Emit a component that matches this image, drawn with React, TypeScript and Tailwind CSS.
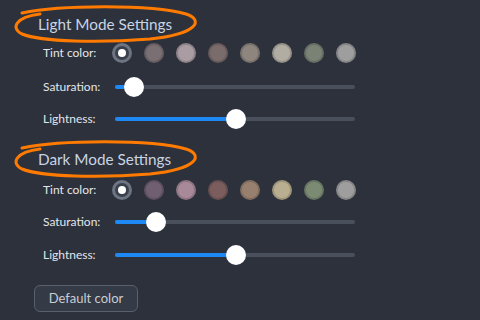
const lightSwatches = ['#7a6f73', '#a99ca2', '#7a6c6b', '#8e857e', '#b2ada3', '#7a8275', '#9e9e9e'];
const darkSwatches = ['#6f5f70', '#a78999', '#7b5d5e', '#98806f', '#b9ae8f', '#7b8b73', '#9e9e9e'];

function Scribble({ top }: { top: number }) {
  return (
    <svg
      className="absolute left-0 pointer-events-none"
      style={{ top }}
      width="210"
      height="48"
      viewBox="0 0 210 48"
      fill="none"
    >
      <path
        d="M22 13 C60 5, 150 4, 186 14 C204 20, 198 34, 150 39 C100 43, 42 42, 22 34 C10 28, 16 17, 40 14"
        stroke="#ff7a00"
        strokeWidth="3"
        strokeLinecap="round"
      />
    </svg>
  );
}

function Heading({ title }: { title: string }) {
  return (
    <div className="relative pt-3 pl-[38px] text-[15.3px] leading-6 text-[#c9d4e2]">
      <Scribble top={0} />
      <span className="relative">{title}</span>
    </div>
  );
}

function Label({ children }: { children: React.ReactNode }) {
  return <div className="w-[69px] shrink-0 text-[12px] text-[#e4e6ea]">{children}</div>;
}

function TintRow({ colors, className = '' }: { colors: string[]; className?: string }) {
  return (
    <div className={`flex items-center h-8 pl-[43px] ${className}`}>
      <Label>Tint color:</Label>
      <div className="flex items-center gap-3">
        <div className="w-5 h-5 rounded-full bg-[#6d7482] flex items-center justify-center">
          <div className="w-[14px] h-[14px] rounded-full bg-[#3a404c] flex items-center justify-center">
            <div className="w-2 h-2 rounded-full bg-white" />
          </div>
        </div>
        {colors.map((c) => (
          <div
            key={c}
            className="w-5 h-5 rounded-full border-2 border-black/15"
            style={{ backgroundColor: c }}
          />
        ))}
      </div>
    </div>
  );
}

function SliderRow({ label, value, className = '' }: { label: string; value: number; className?: string }) {
  return (
    <div className={`flex items-center h-8 pl-[43px] ${className}`}>
      <div className="w-[72px] shrink-0 text-[12px] text-[#e4e6ea]">{label}</div>
      <div className="relative w-[240px] h-1 rounded-full bg-[#4a505b]">
        <div className="absolute left-0 top-0 h-1 rounded-full bg-[#1e88f5]" style={{ width: value }} />
        <div
          className="absolute top-1/2 w-5 h-5 -mt-2.5 -ml-2.5 rounded-full bg-white"
          style={{ left: value }}
        />
      </div>
    </div>
  );
}

export default function App() {
  return (
    <div className="w-[480px] h-[320px] overflow-hidden bg-[#2c313c] font-['Lato',sans-serif]">
      <Heading title="Light Mode Settings" />
      <TintRow colors={lightSwatches} className="mt-px" />
      <SliderRow label="Saturation:" value={19} className="mt-0.5" />
      <SliderRow label="Lightness:" value={121} />
      <Heading title="Dark Mode Settings" />
      <TintRow colors={darkSwatches} className="mt-[3px]" />
      <SliderRow label="Saturation:" value={41} />
      <SliderRow label="Lightness:" value={121} className="mt-px" />
      <button
        type="button"
        className="ml-[34px] mt-[14px] w-[104px] h-[27px] rounded-md border border-[#5a606c] bg-[#343a46] text-[13px] text-[#c9cdd3]"
      >
        Default color
      </button>
    </div>
  );
}
